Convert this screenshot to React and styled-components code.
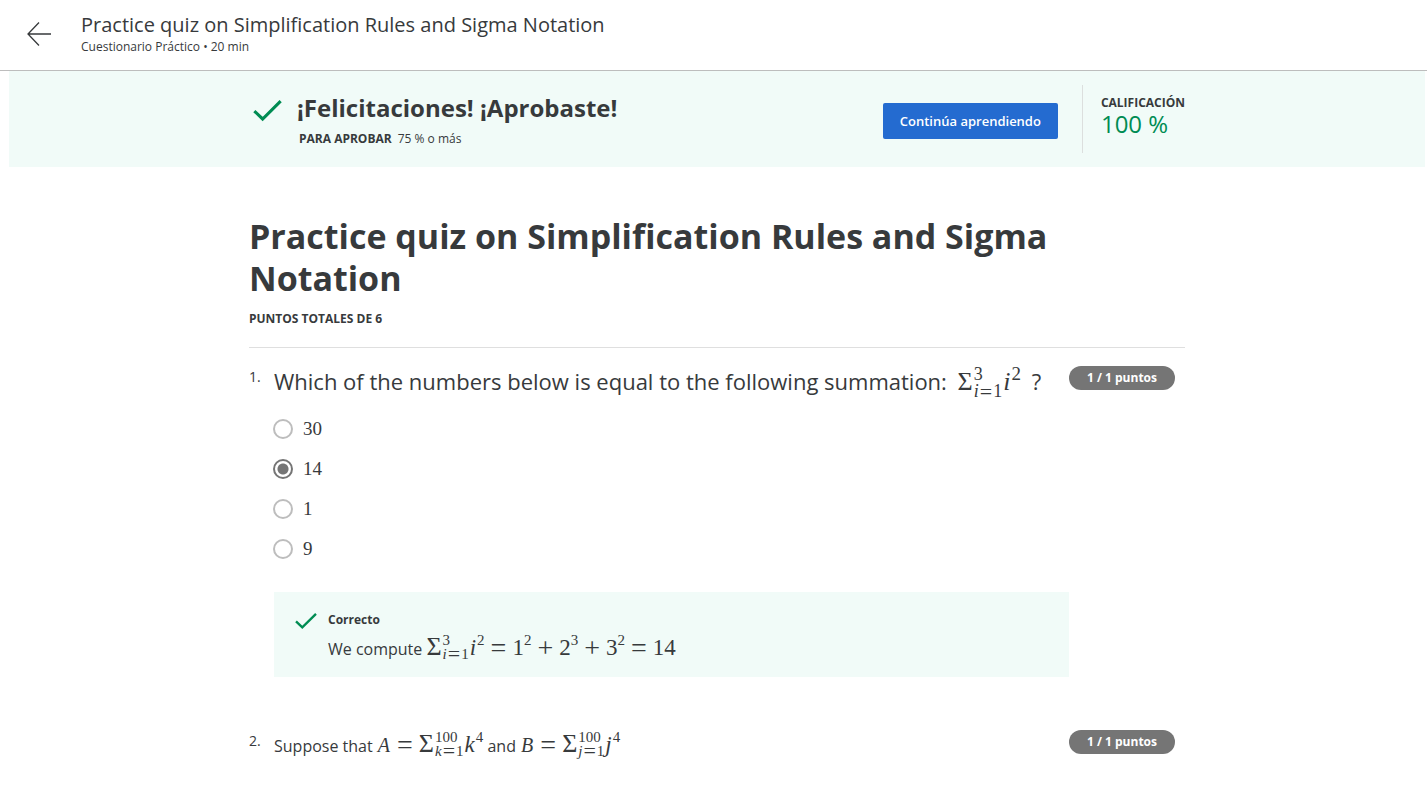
import React from "react";
import styled, { createGlobalStyle } from "styled-components";

const GlobalStyle = createGlobalStyle`
  * { box-sizing: border-box; }
  body {
    margin: 0;
    background: #fff;
    color: #373a3c;
    font-family: "Open Sans", "Noto Sans", sans-serif;
    font-size: 16px;
  }
  h1, h2, p, fieldset { margin: 0; padding: 0; border: 0; }
`;

const Header = styled.header`
  display: flex;
  align-items: center;
  gap: 28px;
  height: 71px;
  padding: 0 25px 2px;
  border-bottom: 1px solid #bdbdbd;
`;

const BackLink = styled.a`
  display: flex;
  color: #373a3c;
`;

const HeaderTitle = styled.p`
  font-size: 20px;
  line-height: 26px;
`;

const HeaderMeta = styled.p`
  font-size: 12px;
  line-height: 18px;
`;

const Banner = styled.section`
  margin: 0 2px 0 9px;
  background: #f1fbf8;
`;

const Container = styled.div`
  max-width: 936px;
  margin: 0 auto;
`;

const BannerRow = styled(Container)`
  display: flex;
  align-items: center;
  height: 96px;
`;

const Result = styled.div`
  display: flex;
  flex: 1;
  gap: 15px;
  padding: 2px 0 0 4px;
`;

const ResultTitle = styled.h2`
  font-size: 24px;
  line-height: 32px;
  font-weight: 700;
`;

const PassLine = styled.p`
  margin-top: 5px;
  padding-left: 2px;
  font-size: 12px;
  line-height: 20px;

  strong { margin-right: 6px; }
`;

const ContinueButton = styled.button`
  height: 36px;
  margin-top: 4px;
  padding: 0 17px;
  border: 0;
  border-radius: 2px;
  background: #246bd0;
  color: #fff;
  font: 600 13px "Open Sans", sans-serif;
`;

const Grade = styled.div`
  height: 68px;
  margin-left: 24px;
  padding: 10px 0 0 18px;
  border-left: 1px solid #dcdfde;
`;

const GradeLabel = styled.p`
  font-size: 12px;
  line-height: 16px;
  font-weight: 700;
`;

const GradeValue = styled.p`
  color: #008c53;
  font-size: 24px;
  line-height: 26px;
`;

const Main = styled.main`
  margin: 0 2px 0 9px;
  padding-top: 48px;
`;

const QuizTitle = styled.h1`
  font-size: 34px;
  line-height: 42px;
  font-weight: 700;
`;

const Total = styled.p`
  margin-top: 10px;
  padding-bottom: 18px;
  border-bottom: 1px solid #dfdfdf;
  font-size: 12px;
  line-height: 20px;
  font-weight: 700;
`;

const Question = styled.section`
  display: flex;
  align-items: flex-start;
  padding: 18px 10px 0 0;
  margin-bottom: 35px;
`;

const Number = styled.span`
  width: 25px;
  font-size: 14px;
  line-height: 22px;
`;

const Body = styled.div`
  flex: 1;
`;

const Prompt = styled.p`
  font-size: ${(p) => (p.$large ? 22 : 16)}px;
  line-height: 30px;
  white-space: nowrap;
`;

const Badge = styled.span`
  width: 106px;
  border-radius: 12px;
  background: #757575;
  color: #fff;
  font-size: 12px;
  line-height: 24px;
  font-weight: 700;
  text-align: center;
`;

const Options = styled.fieldset`
  margin-top: 9px;
`;

const Option = styled.label`
  display: flex;
  align-items: center;
  gap: 10px;
  height: 40px;
  margin-left: -1px;
  font-family: "Liberation Serif", serif;
  font-size: 19px;
`;

const Radio = styled.input`
  appearance: none;
  width: 20px;
  height: 20px;
  margin: 0;
  border: 2px solid #bdbdbd;
  border-radius: 50%;
  background: #fff;

  &:checked {
    border-color: #757575;
    background: radial-gradient(circle, #757575 5px, #fff 6px);
  }
`;

const Feedback = styled.div`
  display: flex;
  gap: 11px;
  margin-top: 23px;
  padding: 18px 21px 8px;
  background: #f1fbf8;
`;

const FeedbackTitle = styled.p`
  font-size: 12px;
  line-height: 20px;
  font-weight: 700;
`;

const FeedbackText = styled.p`
  font-size: 16px;
  line-height: 39px;
`;

const CheckIcon = styled.svg`
  flex: none;
  fill: none;
  stroke: #008c53;
`;

const BannerCheck = styled.div`
  display: flex;
  padding-top: 4px;
`;

const Formula = styled.span`
  margin: 0 ${(p) => p.$space || 0}px;
  font-family: "Liberation Serif", serif;
  font-size: ${(p) => p.$size}px;
  line-height: 0;
`;

const Sigma = styled.span`
  margin-right: 1px;
  font-size: 26px;
`;

const Variable = styled.i`
  margin: 0 1px;
  font-size: ${(p) => p.$size}px;
`;

const Power = styled.sup`
  font-size: ${(p) => p.$size || 15}px;
  line-height: 0;
  vertical-align: 10px;
`;

const Limits = styled.span`
  display: inline-flex;
  flex-direction: column;
  margin-right: ${(p) => p.$after || 0}px;
  font-size: ${(p) => p.$size}px;
  line-height: ${(p) => p.$size - 1}px;
  vertical-align: 10px;
`;

const Operator = styled.span`
  margin: 0 ${(p) => (p.$small ? 1 : 6)}px;
  font-size: ${(p) => (p.$small ? 22 : 28)}px;
  line-height: 0;
  vertical-align: -2px;
`;

function Check({ size, width }) {
  return (
    <CheckIcon width={size} height={size} viewBox="0 0 28 28" strokeWidth={width} aria-hidden="true">
      <path d="M1.3 14.5 9.3 22.2 26.7 5" />
    </CheckIcon>
  );
}

function Sum({ index, to, size, after }) {
  return (
    <>
      <Sigma>Σ</Sigma>
      <Limits $size={size} $after={after}>
        <span>{to}</span>
        <span>
          <i>{index}</i>
          <Operator $small>=</Operator>1
        </span>
      </Limits>
    </>
  );
}

const options = ["30", "14", "1", "9"];

export default function App() {
  return (
    <>
      <GlobalStyle />
      <Header>
        <BackLink href="#" aria-label="Atrás">
          <svg width="28" height="28" viewBox="0 0 28 28" fill="none" stroke="currentColor" strokeWidth="1.3">
            <path d="M26 14H3M14 2.500 3 14l11 11.500" />
          </svg>
        </BackLink>
        <div>
          <HeaderTitle>Practice quiz on Simplification Rules and Sigma Notation</HeaderTitle>
          <HeaderMeta>Cuestionario Práctico • 20 min</HeaderMeta>
        </div>
      </Header>

      <Banner>
        <BannerRow>
          <Result>
            <BannerCheck>
              <Check size={29} width={3} />
            </BannerCheck>
            <div>
              <ResultTitle>¡Felicitaciones! ¡Aprobaste!</ResultTitle>
              <PassLine>
                <strong>PARA APROBAR</strong>75 % o más
              </PassLine>
            </div>
          </Result>
          <ContinueButton type="button">Continúa aprendiendo</ContinueButton>
          <Grade>
            <GradeLabel>CALIFICACIÓN</GradeLabel>
            <GradeValue>100 %</GradeValue>
          </Grade>
        </BannerRow>
      </Banner>

      <Main>
        <Container>
          <QuizTitle>Practice quiz on Simplification Rules and Sigma Notation</QuizTitle>
          <Total>PUNTOS TOTALES DE 6</Total>

          <Question>
            <Number>1.</Number>
            <Body>
              <Prompt $large>
                Which of the numbers below is equal to the following summation:{" "}
                <Formula $size={26} $space={5}>
                  <Sum size={18} index="i" to="3" />
                  <Variable $size={26}>i</Variable>
                  <Power $size={19}>2</Power>
                </Formula>{" "}
                ?
              </Prompt>
              <Options aria-label="Respuestas">
                {options.map((value) => (
                  <Option key={value}>
                    <Radio type="radio" name="answer" value={value} defaultChecked={value === "14"} />
                    {value}
                  </Option>
                ))}
              </Options>
              <Feedback>
                <Check size={22} width={3} />
                <div>
                  <FeedbackTitle>Correcto</FeedbackTitle>
                  <FeedbackText>
                    We compute{" "}
                    <Formula $size={23}>
                      <Sum size={15} index="i" to="3" />
                      <Variable $size={23}>i</Variable>
                      <Power>2</Power>
                      <Operator>=</Operator>1<Power>2</Power>
                      <Operator>+</Operator>2<Power>3</Power>
                      <Operator>+</Operator>3<Power>2</Power>
                      <Operator>=</Operator>14
                    </Formula>
                  </FeedbackText>
                </div>
              </Feedback>
            </Body>
            <Badge>1 / 1 puntos</Badge>
          </Question>

          <Question>
            <Number>2.</Number>
            <Body>
              <Prompt>
                Suppose that{" "}
                <Formula $size={20}>
                  <Variable $size={20}>A</Variable>
                  <Operator>=</Operator>
                  <Sum size={15} index="k" to="100" />
                  <Variable $size={23}>k</Variable>
                  <Power>4</Power>
                </Formula>{" "}
                and{" "}
                <Formula $size={20}>
                  <Variable $size={20}>B</Variable>
                  <Operator>=</Operator>
                  <Sum size={15} index="j" to="100" />
                  <Variable $size={23}>j</Variable>
                  <Power>4</Power>
                </Formula>
              </Prompt>
            </Body>
            <Badge>1 / 1 puntos</Badge>
          </Question>
        </Container>
      </Main>
    </>
  );
}
